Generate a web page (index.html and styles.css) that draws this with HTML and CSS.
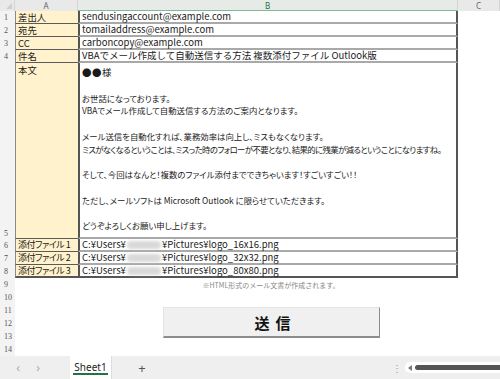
FILE: index.html
```html
<!DOCTYPE html>
<html lang="ja">
<head>
<meta charset="utf-8">
<link rel="stylesheet" href="styles.css">
</head>
<body>
<div class="app">
  <div class="sheet">
    <div class="corner"><span class="tri"></span></div>
    <div class="colhead">A</div>
    <div class="colhead sel">B</div>
    <div class="colhead c">C</div>

    <div class="rn">1</div><div class="ca">差出人</div><div class="cb">sendusingaccount@example.com</div><div class="cc"></div>
    <div class="rn">2</div><div class="ca">宛先</div><div class="cb">tomailaddress@example.com</div><div class="cc"></div>
    <div class="rn">3</div><div class="ca">CC</div><div class="cb">carboncopy@example.com</div><div class="cc"></div>
    <div class="rn">4</div><div class="ca">件名</div><div class="cb">VBAでメール作成して自動送信する方法 複数添付ファイル Outlook版</div><div class="cc"></div>
    <div class="rn bottom">5</div><div class="ca top">本文</div>
    <div class="cb body">
      <p class="sama">●●様</p>
      <p>&nbsp;</p>
      <p>お世話になっております。</p>
      <p>VBAでメール作成して自動送信する方法のご案内となります。</p>
      <p>&nbsp;</p>
      <p>メール送信を自動化すれば、業務効率は向上し、ミスもなくなります。</p>
      <p class="tight">ミスがなくなるということは、ミスった時のフォローが不要となり、結果的に残業が減るということになりますね。</p>
      <p>&nbsp;</p>
      <p>そして、今回はなんと！複数のファイル添付までできちゃいます！すごいすごい！！</p>
      <p>&nbsp;</p>
      <p>ただし、メールソフトは Microsoft Outlook に限らせていただきます。</p>
      <p>&nbsp;</p>
      <p>どうぞよろしくお願い申し上げます。</p>
    </div>
    <div class="cc"></div>
    <div class="rn">6</div><div class="ca att">添付ファイル 1</div><div class="cb path">C:¥Users¥<span class="blur"></span>¥Pictures¥logo_16x16.png</div><div class="cc"></div>
    <div class="rn">7</div><div class="ca att">添付ファイル 2</div><div class="cb path">C:¥Users¥<span class="blur"></span>¥Pictures¥logo_32x32.png</div><div class="cc"></div>
    <div class="rn">8</div><div class="ca att last">添付ファイル 3</div><div class="cb path last">C:¥Users¥<span class="blur"></span>¥Pictures¥logo_80x80.png</div><div class="cc"></div>
    <div class="rn">9</div><div class="ea"></div><div class="eb note">※HTML形式のメール文書が作成されます。</div><div class="cc"></div>
    <div class="rn">10</div><div class="ea"></div><div class="eb"></div><div class="cc"></div>
    <div class="rn">11</div><div class="ea"></div><div class="eb"></div><div class="cc"></div>
    <div class="rn">12</div><div class="ea"></div><div class="eb"></div><div class="cc"></div>
    <div class="rn">13</div><div class="ea"></div><div class="eb"></div><div class="cc"></div>
    <div class="rn">14</div><div class="ea"></div><div class="eb"></div><div class="cc"></div>

    <div class="sendbtn">送<span class="gap"></span>信</div>
  </div>
  <div class="tabbar">
    <span class="nav">&lsaquo;</span>
    <span class="nav">&rsaquo;</span>
    <div class="tab"><span class="tabname">Sheet1</span></div>
    <span class="plus">+</span>
    <span class="spacer"></span>
    <span class="dots">⋮</span>
    <div class="hscroll">
      <span class="arrow"></span>
      <span class="thumb"></span>
    </div>
  </div>
</div>
</body>
</html>
```
FILE: styles.css
```css
* { box-sizing: border-box; }
html, body { margin: 0; padding: 0; background: #fff; }
body {
  width: 500px;
  height: 379px;
  overflow: hidden;
  font-family: "Noto Sans CJK JP", "Noto Sans", sans-serif;
  color: #1a1a1a;
}
.app { display: flex; flex-direction: column; height: 379px; }
.sheet {
  position: relative;
  display: grid;
  grid-template-columns: 15px 63px 380px 42px;
  grid-template-rows: 11px repeat(4, 13px) 176px repeat(3, 13px) repeat(6, 13px);
  flex: none;
}
.corner { background: #e9e9e9; position: relative; border-right: 1px solid #d4d4d4; }
.tri {
  position: absolute; right: 2px; bottom: 2px;
  width: 0; height: 0;
  border-left: 6px solid transparent;
  border-bottom: 6px solid #cfcfcf;
}
.colhead {
  background: #e9e9e9;
  color: #666;
  font-size: 8px;
  line-height: 11px;
  text-align: center;
  border-right: 1px solid #d4d4d4;
  font-family: "Noto Sans", sans-serif;
}
.colhead.sel { color: #217346; border-bottom: 1px solid #7fb89a; background: #e6ebe8; }
.rn {
  background: #f3f3f3;
  color: #555;
  font-family: "Liberation Serif", serif;
  font-size: 8px;
  display: flex;
  align-items: center;
  padding-left: 4px;
}
.rn.bottom { align-items: flex-end; padding-bottom: 1px; }
.ca {
  background: #fff2cc;
  border-left: 1px solid #8a8a8a;
  border-bottom: 1px solid #5a5a5a;
  font-size: 9.4px;
  font-feature-settings: "palt";
  line-height: 12px;
  padding-left: 2px;
  display: flex;
  align-items: center;
  white-space: nowrap;
  overflow: hidden;
}
.ca.att { letter-spacing: -0.5px; font-size: 9px; }
.ca.top { align-items: flex-start; padding-top: 1px; }
.ca.last { border-bottom: 2px solid #555; }
.cb {
  border-left: 2px solid #555;
  border-right: 2px solid #555;
  border-bottom: 2px solid #a9a9a9;
  font-size: 9.5px;
  line-height: 11px;
  padding-left: 2px;
  display: flex;
  align-items: center;
  white-space: nowrap;
}
.cb.last { border-bottom: 2px solid #555; }
.cb.body {
  display: block;
  font-size: 8.4px;
  font-feature-settings: "palt";
  line-height: 12.75px;
  padding-top: 3px;
  overflow: hidden;
}
.cb.body p { margin: 0; white-space: nowrap; }
.cb.body p.sama { font-feature-settings: normal; font-size: 9.5px; letter-spacing: 0.5px; }
.cb.body p.tight { letter-spacing: -0.6px; }
.blur {
  display: inline-block;
  width: 34px;
  height: 8px;
  margin: 0 1px;
  background: #cfcfcf;
  border-radius: 4px;
  filter: blur(1.5px);
  opacity: 0.8;
}
.note {
  font-size: 7px;
  color: #888;
  display: flex;
  align-items: center;
  justify-content: center;
  white-space: nowrap;
  padding-left: 6px;
}
.sendbtn {
  position: absolute;
  left: 163px;
  top: 307px;
  width: 217px;
  height: 31px;
  background: #f0f0f0;
  border-top: 1px solid #e4e4e4;
  border-left: 1px solid #e4e4e4;
  border-right: 1px solid #8c8c8c;
  border-bottom: 2px solid #8c8c8c;
  font-size: 15px;
  font-weight: bold;
  color: #111;
  display: flex;
  align-items: center;
  justify-content: center;
  padding-left: 2px;
}
.gap { display: inline-block; width: 6px; }
.tabbar {
  flex: 1;
  background: #efefef;
  display: flex;
  align-items: stretch;
  font-family: "Noto Sans", sans-serif;
  color: #999;
  font-size: 12px;
}
.nav { width: 20px; display: flex; align-items: center; justify-content: center; margin-left: 8px; color: #aaa; }
.nav + .nav { margin-left: 0; }
.tab {
  margin-left: 22px;
  width: 42px;
  background: #fff;
  display: flex;
  align-items: center;
  justify-content: center;
  border-right: 1px solid #dcdcdc;
}
.tabname {
  color: #222;
  font-size: 10px;
  line-height: 12px;
  border-bottom: 2px solid #217346;
  padding: 0 1px;
}
.plus { width: 20px; margin-left: 20px; display: flex; align-items: center; justify-content: center; color: #555; font-size: 13px; }
.spacer { flex: 1; }
.dots { width: 10px; display: flex; align-items: center; justify-content: center; color: #999; font-size: 10px; margin-right: 3px; }
.hscroll {
  width: 95px;
  margin: 6px 0;
  background: #fff;
  border-radius: 5px 0 0 5px;
  display: flex;
  align-items: center;
  padding-left: 3px;
}
.arrow {
  width: 0; height: 0;
  border-top: 3px solid transparent;
  border-bottom: 3px solid transparent;
  border-right: 4px solid #777;
  margin-right: 3px;
}
.thumb { flex: 1; height: 5px; background: #555; border-radius: 3px 0 0 3px; }
```
